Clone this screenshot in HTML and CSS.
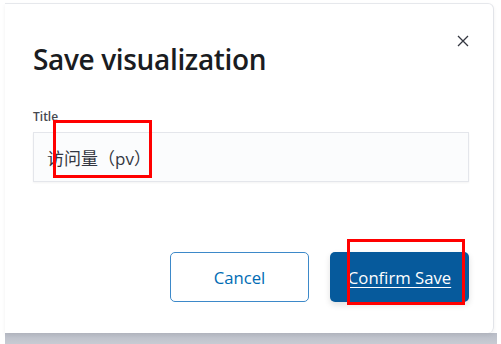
FILE: index.html
```html
<!DOCTYPE html>
<html lang="en">
<head>
    <meta charset="UTF-8">
    <meta name="viewport" content="width=device-width, initial-scale=1">
    <title>Save visualization</title>
    <link rel="stylesheet" href="styles.css">
</head>
<body>
    <div class="modal">
        <button class="close" aria-label="Close">
            <svg width="12" height="12" viewBox="0 0 12 12">
                <path d="M1 1 L11 11 M11 1 L1 11" stroke="#343741" stroke-width="1.3" fill="none"/>
            </svg>
        </button>
        <h1 class="modal-title">Save visualization</h1>

        <label class="field-label" for="title">Title</label>
        <div class="field">
            <input id="title" class="field-input" type="text" value="访问量（pv）">
            <span class="mark mark-input"></span>
        </div>

        <div class="footer">
            <button class="btn btn-empty">Cancel</button>
            <div class="confirm-wrap">
                <button class="btn btn-fill">Confirm Save</button>
                <span class="mark mark-confirm"></span>
            </div>
        </div>
    </div>
    <div class="backdrop"></div>
</body>
</html>
```

FILE: styles.css
```css
* {
    box-sizing: border-box;
}

body {
    margin: 0;
    background: #fff;
    font-family: "Open Sans", "Noto Sans CJK SC", sans-serif;
    color: #343741;
    height: 344px;
    overflow: hidden;
}

.modal {
    position: relative;
    margin: 3px 7px 0 5px;
    height: 330px;
    background: #fff;
    border-top: 1px solid #e6e8ec;
    border-right: 1px solid #e2e4e9;
    border-radius: 0 6px 6px 0;
    padding: 0 24px 0 28px;
    box-shadow: 0 2px 4px rgba(0, 0, 0, 0.06);
}

.backdrop {
    height: 11px;
    margin: 0 4px 0 5px;
    background: linear-gradient(#b9bdc7, #c8cbd3);
}

.close {
    position: absolute;
    top: 29px;
    right: 22px;
    width: 16px;
    height: 16px;
    padding: 2px;
    border: none;
    background: none;
    display: flex;
    align-items: center;
    justify-content: center;
}

.modal-title {
    margin: 0;
    padding-top: 35px;
    font-size: 28px;
    line-height: 40px;
    font-weight: 600;
    letter-spacing: -0.35px;
    color: #1a1c21;
}

.field-label {
    display: block;
    margin-top: 29px;
    font-size: 12px;
    line-height: 18px;
    font-weight: 600;
    color: #45484f;
}

.field {
    position: relative;
    margin-top: 6px;
}

.field-input {
    display: block;
    width: 100%;
    height: 50px;
    padding: 0 13px;
    border: 1px solid #e4e6eb;
    background: #fbfcfd;
    box-shadow: 0 1px 2px rgba(0, 0, 0, 0.05);
    font-family: "Open Sans", "Noto Sans CJK SC", sans-serif;
    font-size: 17px;
    color: #343741;
    outline: none;
}

.footer {
    display: flex;
    justify-content: flex-end;
    gap: 21px;
    margin-top: 70px;
}

.confirm-wrap {
    position: relative;
}

.btn {
    width: 139px;
    height: 50px;
    border-radius: 5px;
    font-family: "Open Sans", sans-serif;
    font-size: 16.7px;
    cursor: pointer;
}

.btn-empty {
    background: #fff;
    border: 1px solid #3d89c9;
    color: #006bb4;
}

.btn-fill {
    background: #065a9c;
    border: none;
    color: #fff;
    text-decoration: underline;
    text-underline-offset: 3px;
    box-shadow: 0 3px 6px rgba(0, 0, 0, 0.12);
}

.mark {
    position: absolute;
    border: 3px solid #ff0000;
}

.mark-input {
    left: 20px;
    top: -12px;
    width: 99px;
    height: 58px;
}

.mark-confirm {
    left: 17px;
    top: -13px;
    width: 118px;
    height: 66px;
}
```
